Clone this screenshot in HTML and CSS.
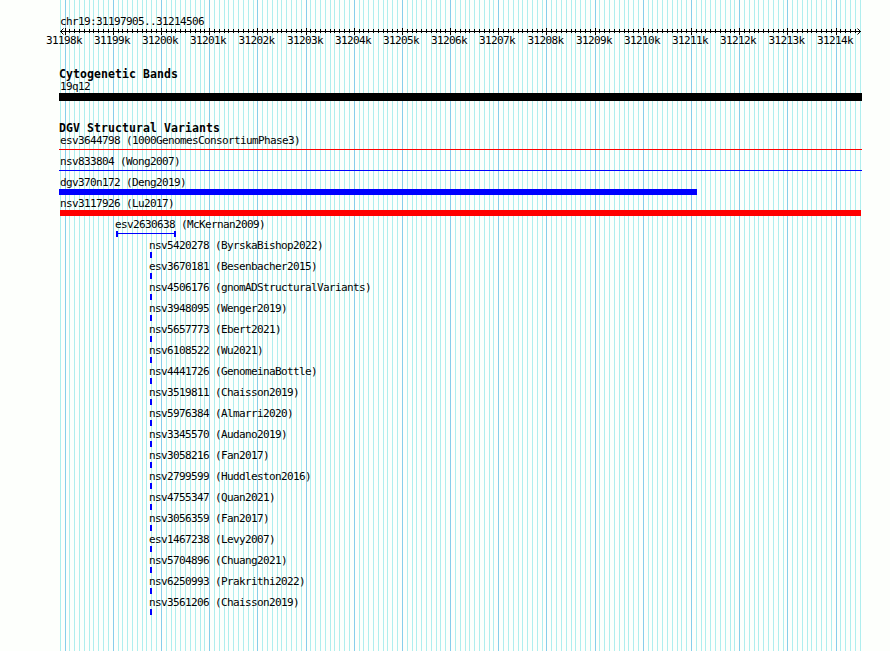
FILE: index.html
```
<!DOCTYPE html>
<html lang="en">
<head>
  <meta charset="UTF-8" />
  <meta name="viewport" content="width=device-width, initial-scale=1.0"/>
  <title>chr19:31197905..31214506</title>
  <link rel="stylesheet" href="styles.css">
</head>
<body>
  <div class="browser">
    <svg class="grid" id="grid" width="890" height="651"></svg>

    <header class="ruler">
      <div class="region">chr19:31197905..31214506</div>
      <svg class="axis" id="axis" width="890" height="9"></svg>
      <div class="axis-labels" id="axisLabels"></div>
    </header>

    <section class="track cytoband">
      <h2>Cytogenetic Bands</h2>
      <div class="label">19q12</div>
      <div class="band"></div>
    </section>

    <section class="track variants">
      <h2>DGV Structural Variants</h2>
      <div id="features"></div>
    </section>
  </div>

  <script src="script.js"></script>
</body>
</html>
```
FILE: styles.css
```
body {
  margin: 0;
  background: #fdfffc;
  color: #000;
  font-family: "DejaVu Sans Mono", monospace;
  font-size: 11px;
  line-height: 12px;
  letter-spacing: -0.622px;
}

.browser {
  position: relative;
  width: 890px;
  height: 651px;
  overflow: hidden;
}

/* grid lines lie behind all the tracks */
.grid {
  position: absolute;
  top: 0;
  left: 0;
  z-index: -1;
}

.grid .minor {
  fill: #afeeee;
}

.grid .major {
  fill: #87ceeb;
}

.ruler {
  padding-top: 16px;
  height: 53px;
}

.region {
  padding-left: 60px;
  height: 11px;
}

.axis {
  display: block;
}

.axis-labels {
  display: flex;
  margin-left: 40px;
  margin-top: -1px;
  white-space: pre;
}

.axis-labels span {
  flex: none;
  text-align: center;
}

.track h2 {
  margin: 0;
  padding-left: 59px;
  font-size: 11.5px;
  line-height: 13px;
  letter-spacing: 0.077px;
}

.label {
  padding-left: 60px;
  height: 12px;
  white-space: nowrap;
}

.cytoband {
  height: 54px;
}

.cytoband h2 {
  margin-top: -1px;
}

.band {
  height: 8px;
  width: 803px;
  margin-left: 59px;
  background: #000;
}

.feature {
  height: 21px;
}

.feature .label {
  padding-left: 0;
}

.glyph {
  height: 6px;
  background: currentColor;
}

.glyph.line {
  height: 1px;
  margin-top: 2px;
}

.glyph.range {
  box-sizing: border-box;
  border: solid currentColor;
  border-width: 0 2px;
  background: linear-gradient(currentColor, currentColor) 0 2px / 100% 1px no-repeat;
}

.gain {
  color: #00f;
}

.loss {
  color: #f00;
}
```
FILE: script.js
```
const START = 31197905;
const END = 31214506;
const LEFT = 60;
const SCALE = 800 / (END - START + 1);

const toX = (bp) => Math.round(LEFT + (bp - START) * SCALE);

const grid = document.getElementById('grid');
const axis = document.getElementById('axis');
const axisLabels = document.getElementById('axisLabels');
const features = document.getElementById('features');

// Grid and ruler ticks, one every 100 bp
let gridLines = '';
let ticks = '<rect x="60" y="4" width="801" height="1"/>';
let labels = '';
for (let bp = 31197900; bp <= END; bp += 100) {
  const x = toX(bp);
  const major = bp % 1000 === 0;
  gridLines += `<rect class="${major ? 'major' : 'minor'}" x="${x}" y="0" width="1" height="651"/>`;
  if (x > 62 && x < 860) {
    ticks += major
      ? `<rect x="${x}" y="1" width="1" height="7"/>`
      : `<rect x="${x}" y="2" width="1" height="4"/>`;
  }
  if (major) {
    const width = toX(bp + 1000) - x;
    labels += `<span style="width:${width}px">${bp / 1000}k</span>`;
  }
}
ticks += '<path d="M63.5 1.5L60.5 4.5L63.5 7.5M857.5 1.5L860.5 4.5L857.5 7.5" fill="none" stroke="#000"/>';
grid.innerHTML = gridLines;
axis.innerHTML = ticks;
axisLabels.innerHTML = labels;

// name, label x, glyph x, glyph width, glyph shape, type
const wide = [
  ['esv3644798 (1000GenomesConsortiumPhase3)', 60, 59, 803, 'line', 'loss'],
  ['nsv833804 (Wong2007)', 60, 59, 803, 'line', 'gain'],
  ['dgv370n172 (Deng2019)', 60, 59, 638, 'box', 'gain'],
  ['nsv3117926 (Lu2017)', 60, 60, 801, 'box', 'loss'],
  ['esv2630638 (McKernan2009)', 115, 116, 60, 'range', 'gain']
];

const small = [
  'nsv5420278 (ByrskaBishop2022)',
  'esv3670181 (Besenbacher2015)',
  'nsv4506176 (gnomADStructuralVariants)',
  'nsv3948095 (Wenger2019)',
  'nsv5657773 (Ebert2021)',
  'nsv6108522 (Wu2021)',
  'nsv4441726 (GenomeinaBottle)',
  'nsv3519811 (Chaisson2019)',
  'nsv5976384 (Almarri2020)',
  'nsv3345570 (Audano2019)',
  'nsv3058216 (Fan2017)',
  'nsv2799599 (Huddleston2016)',
  'nsv4755347 (Quan2021)',
  'nsv3056359 (Fan2017)',
  'esv1467238 (Levy2007)',
  'nsv5704896 (Chuang2021)',
  'nsv6250993 (Prakrithi2022)',
  'nsv3561206 (Chaisson2019)'
].map((name) => [name, 149, 150, 2, 'box', 'gain']);

features.innerHTML = [...wide, ...small].map(([name, labelX, x, width, shape, type]) => `
  <div class="feature">
    <div class="label" style="margin-left:${labelX}px">${name}</div>
    <div class="glyph ${shape} ${type}" style="margin-left:${x}px;width:${width}px"></div>
  </div>`).join('');
```
